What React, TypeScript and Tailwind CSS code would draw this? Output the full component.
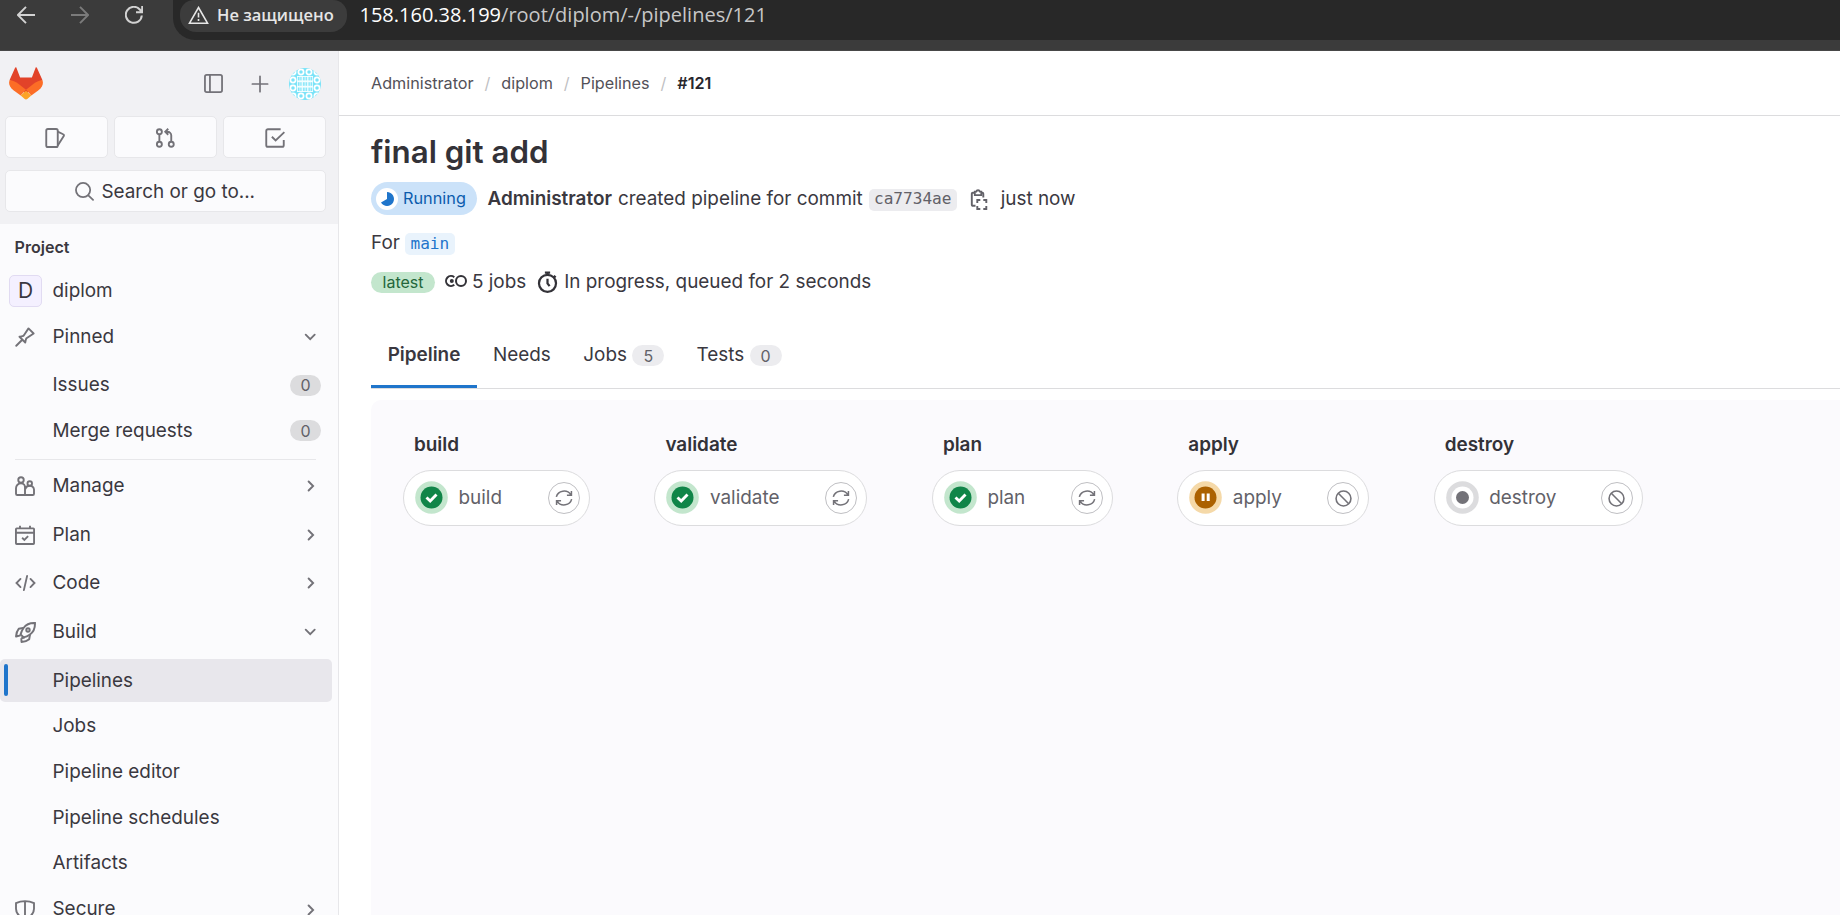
import React from "react";

type IconProps = { className?: string };

const Svg = ({ className = "size-5", children, w = 1.5 }: IconProps & { children: React.ReactNode; w?: number }) => (
  <svg viewBox="0 0 16 16" className={`shrink-0 ${className}`} fill="none" stroke="currentColor" strokeWidth={w}>
    {children}
  </svg>
);

const ChevronDown = () => (
  <Svg className="size-4 text-[#737278]" w={1.9}>
    <path d="M3.700 5.700 8.200 10.200 12.700 5.700" strokeLinecap="round" />
  </Svg>
);
const ChevronRight = () => (
  <Svg className="size-4 text-[#737278]" w={1.9}>
    <path d="M6.600 3.500 11.100 8 6.600 12.500" strokeLinecap="round" />
  </Svg>
);
const PinIcon = () => (
  <Svg>
    <path d="M1 15 5.600 10.400M3.600 7.800 8.200 12.400C8.600 11 8.400 9.800 9.200 9L14.900 5.200 10.800 1.100 7 6.800C6.200 7.600 5 7.400 3.600 7.800Z" strokeLinejoin="round" strokeLinecap="round" />
  </Svg>
);
const PeopleIcon = () => (
  <Svg>
    <circle cx="4.800" cy="3.200" r="2.200" />
    <circle cx="11.800" cy="6" r="1.800" />
    <path d="M8 15.200H1.800a1 1 0 0 1-1-1V9.800a4 4 0 0 1 4-4C7 5.800 8 7.600 8 9.200V15.200H14.200a1 1 0 0 0 1-1V10.800a3.200 3.200 0 0 0-3.400-3C10 7.800 8.600 9 8.400 10.600" />
  </Svg>
);
const CalendarIcon = () => (
  <Svg>
    <rect x=".75" y="2.700" width="14.500" height="12.500" rx=".6" />
    <path d="M.75 6.200h14.500M4 .5v2.500M12 .5v2.500M5.700 10.200l1.800 1.700 3-3" />
  </Svg>
);
const CodeIcon = () => (
  <Svg className="h-5 w-[21px]">
    <path d="M4 4.700.8 8 4 11.300M12 4.700 15.200 8 12 11.300M9.300 2.300 6.700 13.700" strokeLinecap="round" />
  </Svg>
);
const RocketIcon = () => (
  <Svg className="size-[21px]" w={1.5}>
    <path d="M15.200.8C11 .6 8.500 1.800 6.500 4.600 5.400 6.200 4.700 7.700 4.300 9.400L6.600 11.700C8.300 11.300 9.800 10.600 11.400 9.500 14.200 7.500 15.400 5 15.200.8Z" />
    <circle cx="9.900" cy="6.100" r="1.300" />
    <path d="M6.200 4.600 2.800 5.200C1.600 6.600 1 8.200.8 11L4.300 10.200M11.400 9.800 10.800 13.200C9.400 14.400 7.800 15 5 15.200L4.800 12.400M7.500 11.700 4.800 12.400" strokeLinejoin="round" />
  </Svg>
);
const ShieldIcon = () => (
  <Svg>
    <path d="M8 .9C5.500.9 3 1.400.8 2.500V7C.8 11 4 13.700 8 15.200 12 13.700 15.200 11 15.200 7V2.500C13 1.400 10.500.9 8 .9ZM8 .9V15" />
  </Svg>
);
const RetryIcon = () => (
  <Svg className="size-[18px]" w={1.35}>
    <path d="M1.200 7A7 6.600 0 0 1 14 5M14.600 1.800V5.600H10.600M14.800 9A7 6.600 0 0 1 2 11M1.400 14.200V10.400H5.400" />
  </Svg>
);
const CancelIcon = () => (
  <Svg className="size-[17px]" w={1.5}>
    <circle cx="8" cy="8" r="7" />
    <path d="M3.100 3.100 12.900 12.900" />
  </Svg>
);
const CopyIcon = () => (
  <svg viewBox="0 0 18 24" className="ml-[13px] h-6 w-[18px] shrink-0 text-[#626168]" fill="none" stroke="currentColor" strokeWidth="1.900">
    <path d="M5.500 18.800H2.800A1 1 0 0 1 1.800 17.800V6.700A1 1 0 0 1 2.800 5.700H4.500M11.500 5.700H12.300A1 1 0 0 1 13.300 6.700V10.500" />
    <path d="M4.800 8.200V4.700H6.200A1.900 1.900 0 0 1 9.900 4.700H11.300V8.200Z" strokeWidth="1.800" />
    <path d="M7.300 16V13H10.300M13.300 13H16.300V16M16.300 19V22H13.300M10.300 22H7.300V19" />
  </svg>
);

const Tanuki = () => (
  <svg viewBox="0 0 34 33" className="h-[33px] w-[34px]">
    <path fill="#E24329" d="M7.200.3C6.800 0 6.300.2 6.100.8L.6 13 17 27 33.400 13 27.900.8C27.700.2 27.200 0 26.800.3L22.900 10.400H11.100Z" />
    <path fill="#FC6D26" d="M33.400 13C30.500 13.500 27.500 14.800 25 16.600L17 22.700 22.300 28.600 29.500 23.200C33.700 20 34.600 16.500 33.400 13Z" />
    <path fill="#FC6D26" d="M.6 13C3.500 13.500 6.500 14.800 9 16.600L17 22.700 11.700 28.600 4.500 23.200C.3 20-.6 16.500.6 13Z" />
    <path fill="#FCA326" d="M11.700 28.500 15.400 31.800C16.400 32.800 17.600 32.800 18.600 31.800L22.300 28.500 17 23.800Z" />
  </svg>
);

const Avatar = () => (
  <svg viewBox="0 0 32 32" className="size-8">
    <defs>
      <clipPath id="round"><circle cx="16" cy="16" r="16" /></clipPath>
      <pattern id="ring" width="8" height="8" patternUnits="userSpaceOnUse">
        <circle cx="4" cy="4" r="2.600" fill="none" stroke="#fff" strokeWidth="1.700" />
      </pattern>
      <pattern id="petal" width="5.330" height="5.330" x="8" y="8" patternUnits="userSpaceOnUse">
        <path d="M.8.8H2.300V4.500H.8ZM3.200.8H4.600V4.500H3.200Z" fill="#7be3f8" />
      </pattern>
    </defs>
    <g clipPath="url(#round)">
      <rect width="32" height="32" fill="#7be3f8" />
      <rect width="32" height="32" fill="url(#ring)" />
      <rect x="8" y="8" width="16" height="16" fill="#f4feff" />
      <rect x="8" y="8" width="16" height="16" fill="url(#petal)" />
    </g>
  </svg>
);

const Count = ({ n, dark }: { n: number; dark?: boolean }) => (
  <span className={`flex h-[21px] items-center justify-center rounded-full text-[16px] text-[#626168] ${dark ? "w-[31px] bg-[#dcdcde]" : "w-8 bg-[#ececef]"}`}>{n}</span>
);

const NavSection = ({ icon, label, open, h = "h-[48.7px]" }: { icon: React.ReactNode; label: string; open?: boolean; h?: string }) => (
  <div className={`flex shrink-0 items-center pl-[15px] pr-[20px] ${h}`}>
    <span className="flex w-[37.500px] text-[#737278]">{icon}</span>
    <span className="flex-1">{label}</span>
    {open ? <ChevronDown /> : <ChevronRight />}
  </div>
);

const NavItem = ({ label, count }: { label: string; count?: number }) => (
  <div className="flex h-[45.7px] shrink-0 items-center justify-between pl-[52.500px] pr-[17px] pt-[1.500px]">
    <span>{label}</span>
    {count !== undefined && <Count n={count} dark />}
  </div>
);

const TopButton = ({ children }: { children: React.ReactNode }) => (
  <div className="flex h-[42px] w-[103px] items-center justify-center rounded-[5px] border border-[#e7e7ea] bg-[#fbfbfd] pt-px text-[#737278]">{children}</div>
);

function Browser() {
  return (
    <header className="flex h-[51px] shrink-0 items-start border-b border-[#484848] bg-[#3b3b3b] font-['Open_Sans',sans-serif]">
      <div className="flex h-[30px] w-[173px] items-center text-[#d2d2d2]">
        <svg viewBox="0 0 18 18" className="ml-[17px] size-[18px] shrink-0" fill="none" stroke="currentColor" strokeWidth="1.900"><path d="M18 9H1M9 .8.900 9 9 17.200" /></svg>
        <svg viewBox="0 0 18 18" className="ml-[36px] size-[18px] shrink-0 text-[#7b7b7b]" fill="none" stroke="currentColor" strokeWidth="1.900"><path d="M0 9h17M9 .8 17.100 9 9 17.200" /></svg>
        <svg viewBox="0 0 18 18" className="ml-[36px] size-[18px] shrink-0" fill="none" stroke="currentColor" strokeWidth="2"><path d="M16.800 9.500A8 8 0 1 1 14.800 3.500L17 6M17.200 0V6.300H11" /></svg>
      </div>
      <div className="flex h-[40px] flex-1 items-start rounded-bl-[22px] bg-[#282828] pl-[7px]">
        <div className="flex h-[32px] w-[167px] items-center rounded-b-[16px] rounded-t-[14px] bg-[#3c3c3c] pb-[2px] pl-[8px] text-[#e6e6e6]">
          <svg viewBox="0 0 21 18" className="h-[18px] w-[21px] shrink-0" fill="none" stroke="currentColor" strokeWidth="1.600"><path d="M10.500 1.500 19.500 17.200H1.500ZM10.500 6.800V11.500M10.500 13V15" /></svg>
          <span className="ml-[8px] whitespace-nowrap text-[16.500px] font-semibold">Не защищено</span>
        </div>
        <div className="ml-[12.500px] mt-px whitespace-nowrap text-[20px] leading-[27px] text-[#c7c7c7]"><span className="text-white">158.160.38.199</span>/root/diplom/-/pipelines/121</div>
      </div>
    </header>
  );
}

function Sidebar() {
  return (
    <aside className="flex h-full w-[339px] shrink-0 flex-col overflow-hidden border-r border-[#e7e7ea] bg-[#fbfbfd] text-[18.900px]">
      <div className="flex h-[173px] shrink-0 flex-col bg-[#f1f1f4] pl-[4.500px] pr-[12px] text-[#737278]">
        <div className="flex h-[65px] items-center pl-[4.500px] pr-[5px]">
          <Tanuki />
          <Svg className="ml-auto size-[19px]"><rect x=".8" y=".8" width="14.400" height="14.400" rx="1.500" /><path d="M5 .8V15.200" /></Svg>
          <Svg className="ml-[28px] mr-[20px] size-[18px]"><path d="M8 1.200V14.800M1.200 8H14.800" strokeLinecap="round" /></Svg>
          <Avatar />
        </div>
        <div className="flex justify-between">
          <TopButton><Svg className="mr-[3px] size-[20px]"><rect x="1" y=".8" width="9.200" height="14.400" rx="1.300" /><path d="M10.200 2.900 14.500 5C15.200 5.300 15.300 5.900 15 6.500L10.200 14" /></Svg></TopButton>
          <TopButton><Svg className="size-[20px]" w={1.5}><circle cx="3.500" cy="3" r="2" /><circle cx="3.500" cy="13" r="2" /><circle cx="13" cy="13" r="2" /><path d="M3.500 5V11M13 11V6A3 3 0 0 0 10 3H8.500M10.600.6 8.200 3 10.600 5.400" /></Svg></TopButton>
          <TopButton><Svg className="size-[20px]"><path d="M12.500 1H2.300A1.300 1.300 0 0 0 1 2.300V13.700A1.300 1.300 0 0 0 2.300 15H13.700A1.300 1.300 0 0 0 15 13.700V9.500M5.500 7 8.500 10 15.500 3.300" /></Svg></TopButton>
        </div>
        <div className="mt-[12px] flex h-[42px] items-center justify-center rounded-[5px] border border-[#e7e7ea] bg-[#fbfbfd] pt-px">
          <Svg className="mr-[7px] size-[19px]"><circle cx="6.800" cy="6.800" r="6" /><path d="M11.200 11.200 15.200 15" strokeLinecap="round" /></Svg>
          <span className="pt-[2px] text-[#3a383f]">Search or go to...</span>
        </div>
      </div>
      <nav className="flex flex-col text-[#3a383f]">
        <div className="flex h-[44px] shrink-0 items-center pl-[14.500px] pt-[3px] text-[16.100px] font-semibold">Project</div>
        <div className="flex h-[45.700px] shrink-0 items-center pl-[9px]">
          <span className="flex h-8 w-[33px] items-center justify-center rounded-[5px] border border-[#e1dbf2] bg-[#f4f0ff] text-[21px]">D</span>
          <span className="ml-[10.500px]">diplom</span>
        </div>
        <NavSection icon={<PinIcon />} label="Pinned" open h="h-[46px]" />
        <div className="h-[2px] shrink-0" />
        <NavItem label="Issues" count={0} />
        <NavItem label="Merge requests" count={0} />
        <div className="ml-[15px] mr-[22px] mt-[6px] h-px shrink-0 bg-[#e7e7ea]" />
        <div className="h-[2px] shrink-0" />
        <NavSection icon={<PeopleIcon />} label="Manage" />
        <NavSection icon={<CalendarIcon />} label="Plan" h="h-[48px]" />
        <NavSection icon={<CodeIcon />} label="Code" />
        <NavSection icon={<RocketIcon />} label="Build" open h="h-[49.400px]" />
        <div className="mb-[1px] mr-[6px] mt-[2px] flex h-[43px] shrink-0 items-center rounded-[5px] bg-[#e8e7ec] pl-[4px]">
          <span className="mr-[44.500px] h-8 w-[4px] rounded-full bg-[#1f75cb]" />
          <span className="pt-[2px]">Pipelines</span>
        </div>
        <NavItem label="Jobs" />
        <NavItem label="Pipeline editor" />
        <NavItem label="Pipeline schedules" />
        <NavItem label="Artifacts" />
        <NavSection icon={<ShieldIcon />} label="Secure" h="h-[48px]" />
      </nav>
    </aside>
  );
}

type Job = { name: string; status: "success" | "manual" | "created"; width: string };
const jobs: Job[] = [
  { name: "build", status: "success", width: "w-[187px]" },
  { name: "validate", status: "success", width: "w-[213px]" },
  { name: "plan", status: "success", width: "w-[181px]" },
  { name: "apply", status: "manual", width: "w-[192px]" },
  { name: "destroy", status: "created", width: "w-[209px]" },
];

const StatusIcon = ({ status }: { status: Job["status"] }) => (
  <svg viewBox="0 0 33 33" className="mb-px size-[33px] shrink-0">
    {status === "success" && (<><circle cx="16.500" cy="16.500" r="16.300" fill="#c3e6cd" /><circle cx="16.500" cy="16.500" r="11" fill="#108548" /><path d="M11.500 16.500 15.200 20 21.500 13.500" fill="none" stroke="#fff" strokeWidth="2.900" /></>)}
    {status === "manual" && (<><circle cx="16.500" cy="16.500" r="16.300" fill="#f5d9a8" /><circle cx="16.500" cy="16.500" r="11" fill="#ab6100" /><path d="M14.100 12.500V20M19.200 12.500V20" stroke="#fff" strokeWidth="3" /></>)}
    {status === "created" && (<><circle cx="16.500" cy="16.500" r="16.300" fill="#dcdcde" /><circle cx="16.500" cy="16.500" r="11" fill="#fff" /><circle cx="16.500" cy="16.500" r="6.500" fill="#737278" /></>)}
  </svg>
);

function Stage({ name, status, width }: Job) {
  return (
    <section className={`shrink-0 ${width}`}>
      <h2 className="pl-[11px] text-[18.900px] font-semibold leading-6">{name}</h2>
      <div className="mt-[13px] flex h-14 items-center rounded-full border border-[#dcdcde] bg-white pl-[11px] pr-[9px]">
        <StatusIcon status={status} />
        <span className="ml-[10.500px] text-[18.900px] text-[#626168]">{name}</span>
        <span className="ml-auto flex size-8 items-center justify-center rounded-full border border-[#bfbfc3] text-[#737278]">
          {status === "success" ? <RetryIcon /> : <CancelIcon />}
        </span>
      </div>
    </section>
  );
}

function Main() {
  return (
    <main className="flex min-w-0 flex-1 flex-col bg-white text-[18.900px] text-[#3a383f]">
      <div className="flex h-[65px] shrink-0 items-center border-b border-[#dcdcde] pl-8 text-[16.200px] text-[#535158]">
        <span>Administrator</span><span className="w-[27.700px] text-center text-[#bfbfc3]">/</span>
        <span>diplom</span><span className="w-[27.700px] text-center text-[#bfbfc3]">/</span>
        <span>Pipelines</span><span className="w-[27.700px] text-center text-[#bfbfc3]">/</span>
        <span className="font-semibold text-[#28272d]">#121</span>
      </div>
      <div className="flex flex-col whitespace-nowrap pl-8">
        <h1 className="mb-[-1px] mt-[16px] text-[31.300px] font-semibold leading-10 text-[#333238]">final git add</h1>
        <div className="mt-[11px] flex h-[33px] items-center">
          <span className="flex h-[33px] w-[106px] items-center rounded-full bg-[#cbe2f9] pl-[5px] text-[16.300px] text-[#0b5cad]">
            <svg viewBox="0 0 22 22" className="mr-[5px] size-[22px]"><circle cx="11" cy="11" r="11" fill="#fff" /><path d="M11 11V4A7 7 0 1 1 5 14.600Z" fill="#1f75cb" /></svg>
            Running
          </span>
          <span className="ml-[10.500px] pt-px font-semibold">Administrator</span>
          <span className="ml-[6px] pt-px">created pipeline for commit</span>
          <span className="ml-[6px] mt-[2px] flex h-[22px] w-[88px] items-center justify-center rounded-[5px] bg-[#ececef] font-['DejaVu_Sans_Mono',monospace] text-[16.100px] text-[#626168]">ca7734ae</span>
          <CopyIcon />
          <span className="ml-[13px] pt-px">just now</span>
        </div>
        <div className="mt-[16px] flex h-[24px] items-center">
          <span>For</span>
          <span className="ml-[5px] mt-[2px] flex h-[22px] w-[50px] items-center justify-center rounded-[5px] bg-[#e9f3fc] font-['DejaVu_Sans_Mono',monospace] text-[16.100px] text-[#1f75cb]">main</span>
        </div>
        <div className="mt-[14px] flex h-[26px] items-center">
          <span className="mt-px flex h-[21px] w-[64px] items-center justify-center rounded-full bg-[#c3e6cd] pb-px text-[16px] text-[#24663b]">latest</span>
          <svg viewBox="0 0 22 14" className="mb-[2px] ml-[9.500px] h-[14px] w-[22px]" fill="none" stroke="#333238" strokeWidth="2"><path d="M9.300 3.200A5 5 0 1 0 9.300 10.800" /><circle cx="16" cy="7" r="5" /><circle cx="6.800" cy="7" r="2" fill="#333238" stroke="none" /></svg>
          <span className="ml-[5.500px]">5 jobs</span>
          <Svg className="ml-[11px] h-[22px] w-[21px] text-[#333238]" w={1.7}><circle cx="8" cy="9" r="6.500" /><path d="M8 5.500V9L9.600 11.200M6 .8H10M8 .8V2.700M12.800 3.200 14.200 4.600" /></Svg>
          <span className="ml-[6px]">In progress, queued for 2 seconds</span>
        </div>
      </div>
      <div className="ml-8 mt-[26px] flex h-[68px] shrink-0 border-b border-[#dcdcde]">
        <div className="flex w-[106px] items-center justify-center border-b-[3px] border-[#1f75cb] pt-[5px] font-semibold">Pipeline</div>
        <div className="ml-[16px] flex items-center pt-[2px]">Needs</div>
        <div className="ml-[32.500px] flex items-center gap-[5.500px] pt-[2px]">Jobs<Count n={5} /></div>
        <div className="ml-[32px] flex items-center gap-[5.500px] pt-[2px]">Tests<Count n={0} /></div>
      </div>
      <div className="ml-8 mt-[11px] flex flex-1 gap-[64.450px] rounded-tl-[10px] bg-[#fbfafd] pl-8 pt-[33px] text-[#333238]">
        {jobs.map((j) => <Stage key={j.name} {...j} />)}
      </div>
    </main>
  );
}

export default function App() {
  return (
    <div className="flex h-[915px] w-[1840px] flex-col overflow-hidden font-[Inter,sans-serif]">
      <Browser />
      <div className="flex min-h-0 flex-1">
        <Sidebar />
        <Main />
      </div>
    </div>
  );
}
